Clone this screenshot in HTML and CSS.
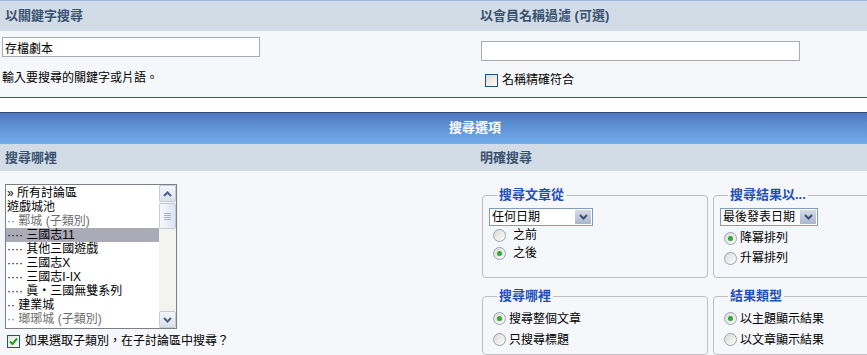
FILE: index.html
```html
<!DOCTYPE html>
<html lang="zh-Hant">
<head>
	<meta charset="UTF-8">
	<title>搜尋討論區</title>
	<link rel="stylesheet" href="styles.css">
</head>
<body>
	<div class="wrap">
		<!--關鍵字 / 會員名稱-->
		<div class="panel top">
			<div class="row thead">
				<div class="cell">以關鍵字搜尋</div>
				<div class="cell">以會員名稱過濾 (可選)</div>
			</div>
			<div class="row alt1 kw-row">
				<div class="cell kw">
					<input type="text" class="textbox kw-box" value="存檔劇本">
					<div class="hint">輸入要搜尋的關鍵字或片語。</div>
				</div>
				<div class="cell user">
					<input type="text" class="textbox user-box" value="">
					<label class="check"><span class="box"></span>名稱精確符合</label>
				</div>
			</div>
		</div>

		<!--搜尋選項-->
		<div class="panel options">
			<div class="tcat">搜尋選項</div>
			<div class="row thead small">
				<div class="cell">搜尋哪裡</div>
				<div class="cell">明確搜尋</div>
			</div>
			<div class="row alt1">
				<div class="cell where">
					<div class="listbox">
						<ul>
							<li>» 所有討論區</li>
							<li>遊戲城池</li>
							<li class="sub">·· 鄴城 (子類別)</li>
							<li class="selected">···· 三國志11</li>
							<li>···· 其他三國遊戲</li>
							<li>···· 三國志X</li>
							<li>···· 三國志I-IX</li>
							<li>···· 眞・三國無雙系列</li>
							<li>·· 建業城</li>
							<li class="sub">·· 瑯琊城 (子類別)</li>
						</ul>
						<div class="sb">
							<span class="sb-btn"><svg width="9" height="6" viewBox="0 0 9 6"><path d="M1 5 L4.5 1.5 L8 5" fill="none" stroke="#4d6185" stroke-width="2"/></svg></span>
							<span class="sb-thumb"><i></i><i></i><i></i><i></i></span>
							<span class="sb-track"></span>
							<span class="sb-btn"><svg width="9" height="6" viewBox="0 0 9 6"><path d="M1 1 L4.5 4.5 L8 1" fill="none" stroke="#4d6185" stroke-width="2"/></svg></span>
						</div>
					</div>
					<label class="check sub-check"><span class="box on"><svg width="9" height="9" viewBox="0 0 9 9"><path d="M1 4.5 L3.5 7 L8 1.5" fill="none" stroke="#21a121" stroke-width="2"/></svg></span>如果選取子類別，在子討論區中搜尋？</label>
				</div>
				<div class="cell exact">
					<div class="sets">
						<fieldset>
							<legend>搜尋文章從</legend>
							<div class="select date">
								<span class="val">任何日期</span>
								<span class="dd"><svg width="9" height="6" viewBox="0 0 9 6"><path d="M1 1 L4.5 4.5 L8 1" fill="none" stroke="#3c4f72" stroke-width="2"/></svg></span>
							</div>
							<label class="radio wide"><span class="dot"></span>之前</label>
							<label class="radio wide"><span class="dot on"></span>之後</label>
						</fieldset>
						<fieldset>
							<legend>搜尋結果以...</legend>
							<div class="select sort">
								<span class="val">最後發表日期</span>
								<span class="dd"><svg width="9" height="6" viewBox="0 0 9 6"><path d="M1 1 L4.5 4.5 L8 1" fill="none" stroke="#3c4f72" stroke-width="2"/></svg></span>
							</div>
							<label class="radio tall first"><span class="dot on"></span>降冪排列</label>
							<label class="radio tall"><span class="dot"></span>升冪排列</label>
						</fieldset>
						<fieldset class="low">
							<legend>搜尋哪裡</legend>
							<label class="radio row2 first"><span class="dot on"></span>搜尋整個文章</label>
							<label class="radio row2"><span class="dot"></span>只搜尋標題</label>
						</fieldset>
						<fieldset class="low">
							<legend>結果類型</legend>
							<label class="radio row2 first"><span class="dot on"></span>以主題顯示結果</label>
							<label class="radio row2"><span class="dot"></span>以文章顯示結果</label>
						</fieldset>
					</div>
				</div>
			</div>
		</div>
	</div>
</body>
</html>
```

FILE: styles.css
```css
* {
    margin: 0;
    padding: 0;
    box-sizing: border-box;
    list-style: none;
}

html,
body {
    overflow: hidden;
}

body {
    background: #fff;
    color: #000;
    font: 12px/14px "Liberation Sans", "Noto Sans CJK TC", sans-serif;
}

.wrap {
    width: 950px;
}

.panel {
    border-top: 1px solid #9dbbe2;
    border-bottom: 1px solid #3e5672;
}

.panel.options {
    margin-top: 14px;
    border-top-color: #2d4b70;
    border-bottom: 0;
}

.row {
    display: grid;
    grid-template-columns: 475px 475px;
}

.thead {
    height: 30px;
    background: #d1dce7;
    color: #3a526f;
    font-weight: bold;
    font-size: 13px;
    line-height: 30px;
}

.thead .cell {
    padding-left: 5px;
}

.thead.small {
    height: 27px;
    line-height: 27px;
}

.alt1 {
    background: #f5f7fa;
}

.kw-row {
    height: 66px;
}

/* 第一區 */
.kw {
    padding: 6px 0 0 2px;
}

.textbox {
    display: block;
    height: 20px;
    border: 1px solid #a5acb2;
    background: #fff;
    font: 12px/18px "Liberation Sans", "Noto Sans CJK TC", sans-serif;
    padding-left: 2px;
    color: #000;
    outline: none;
}

.kw-box {
    width: 258px;
}

.hint {
    margin-top: 14px;
}

.user {
    padding: 10px 0 0 6px;
}

.user-box {
    width: 319px;
}

.check {
    display: flex;
    align-items: center;
    gap: 4px;
    height: 14px;
}

.user .check {
    margin: 12px 0 0 4px;
}

.box {
    width: 13px;
    height: 13px;
    border: 1px solid #1c5180;
    background: linear-gradient(135deg, #dcdcd7, #fbfbf9);
    display: flex;
    align-items: center;
    justify-content: center;
}

.box.on {
    background: linear-gradient(135deg, #e6e6e0, #fdfdfc);
}

/* 搜尋選項 */
.tcat {
    height: 31px;
    background: linear-gradient(#4f79c2, #73adec);
    color: #fff;
    font-weight: bold;
    font-size: 13px;
    line-height: 29px;
    text-align: center;
}

.where {
    padding: 13px 0 0 5px;
}

.listbox {
    width: 172px;
    height: 145px;
    border: 1px solid #7c7f86;
    background: #fff;
    display: flex;
}

.listbox ul {
    flex: 1;
    padding-top: 1px;
}

.listbox li {
    height: 14px;
    line-height: 14px;
    padding-left: 1px;
    white-space: nowrap;
    overflow: hidden;
}

.listbox li.sub {
    color: #6c6c6c;
}

.listbox li.selected {
    background: #ababb8;
}

.sb {
    width: 17px;
    background: #f3f3ef;
    display: flex;
    flex-direction: column;
}

.sb-btn {
    height: 17px;
    border: 1px solid #c3cad8;
    border-radius: 2px;
    background: linear-gradient(#f6f8fc, #d9dfea);
    display: flex;
    align-items: center;
    justify-content: center;
}

.sb-thumb {
    height: 26px;
    margin-top: 1px;
    border: 1px solid #c3cad8;
    border-radius: 2px;
    background: linear-gradient(90deg, #f6f8fc, #dde3ee);
    display: flex;
    flex-direction: column;
    align-items: center;
    justify-content: center;
    gap: 1px;
}

.sb-thumb i {
    width: 7px;
    height: 1px;
    background: #a7b1c6;
}

.sb-track {
    flex: 1;
}

.sub-check {
    margin: 5px 0 0 2px;
    gap: 5px;
}

.exact {
    padding: 17px 0 0 7px;
}

.sets {
    display: grid;
    grid-template-columns: 226px 226px;
    column-gap: 5px;
    row-gap: 11px;
}

fieldset {
    border: 1px solid #bfbfbf;
    border-radius: 4px;
    padding: 0 6px 9px 10px;
    min-width: 0;
}

fieldset.low {
    padding-bottom: 4px;
}

legend {
    margin-left: 4px;
    padding: 0 2px;
    color: #1d4fb6;
    font-weight: bold;
    font-size: 13px;
    line-height: 14px;
}

.select {
    display: flex;
    height: 18px;
    margin: 6px 0 0 -4px;
    border: 1px solid #7f9db9;
    background: #fff;
}

.select.date {
    width: 104px;
}

.select.sort {
    width: 98px;
}

.select .val {
    flex: 1;
    padding-left: 2px;
    line-height: 16px;
    white-space: nowrap;
}

.select .dd {
    width: 16px;
    margin: 1px;
    background: linear-gradient(#d3dbe8, #aab6cc);
    display: flex;
    align-items: center;
    justify-content: center;
}

.radio {
    display: flex;
    align-items: center;
    gap: 3px;
    height: 18px;
}

.radio.wide {
    gap: 7px;
}

.radio.tall {
    height: 20px;
}

.radio.tall.first {
    margin-top: 2px;
}

.radio.row2 {
    height: 21px;
}

.radio.row2.first {
    margin-top: 5px;
}

.dot {
    width: 13px;
    height: 13px;
    border: 1px solid #98a4b2;
    border-radius: 50%;
    background: linear-gradient(135deg, #dcdcd6, #fcfcfb);
    display: flex;
    align-items: center;
    justify-content: center;
}

.dot.on::after {
    content: "";
    width: 5px;
    height: 5px;
    border-radius: 50%;
    background: #3ea53e;
    box-shadow: 0 0 1px #8fd48f;
}
```
